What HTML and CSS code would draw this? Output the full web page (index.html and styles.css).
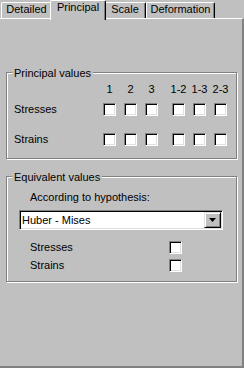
FILE: index.html
```html
<!DOCTYPE html>
<html lang="en">
<head>
  <meta charset="UTF-8">
  <meta name="viewport" content="width=device-width, initial-scale=1.0">
  <title>Principal</title>
  <link rel="stylesheet" href="styles.css">
</head>
<body>
  <div class="tabs">
    <div class="tab tab-detailed">Detailed</div>
    <div class="tab tab-principal active">Principal</div>
    <div class="tab tab-scale">Scale</div>
    <div class="tab tab-deformation">Deformation</div>
  </div>
  <main class="panel">
    <section class="group group-principal">
      <span class="group-title">Principal values</span>
      <div class="grid">
        <span></span>
        <span class="head">1</span>
        <span class="head">2</span>
        <span class="head">3</span>
        <span class="head">1-2</span>
        <span class="head">1-3</span>
        <span class="head">2-3</span>

        <span class="label">Stresses</span>
        <input type="checkbox" class="check">
        <input type="checkbox" class="check">
        <input type="checkbox" class="check">
        <input type="checkbox" class="check">
        <input type="checkbox" class="check">
        <input type="checkbox" class="check">

        <span class="label">Strains</span>
        <input type="checkbox" class="check">
        <input type="checkbox" class="check">
        <input type="checkbox" class="check">
        <input type="checkbox" class="check">
        <input type="checkbox" class="check">
        <input type="checkbox" class="check">
      </div>
    </section>
    <section class="group group-equivalent">
      <span class="group-title">Equivalent values</span>
      <div class="hint">According to hypothesis:</div>
      <div class="combo">
        <span class="combo-value">Huber - Mises</span>
        <span class="combo-btn">
          <svg width="7" height="4" viewBox="0 0 7 4"><polygon points="0,0 7,0 3.5,4" fill="#000"/></svg>
        </span>
      </div>
      <div class="row first">
        <span class="row-label">Stresses</span>
        <input type="checkbox" class="check">
      </div>
      <div class="row">
        <span class="row-label">Strains</span>
        <input type="checkbox" class="check">
      </div>
    </section>
  </main>
</body>
</html>
```

FILE: styles.css
```css
* { box-sizing: border-box; }
body {
  margin: 0;
  width: 244px;
  height: 368px;
  overflow: hidden;
  background-color: #c0c0c0;
  font-family: 'Liberation Sans', Arial, sans-serif;
  font-size: 11px;
  line-height: 13px;
  color: #000;
}

/* tab strip */
.tabs {
  display: flex;
  align-items: flex-end;
  height: 18px;
  padding-left: 1px;
}
.tab {
  height: 16px;
  border-top: 1px solid #fff;
  border-left: 1px solid #fff;
  border-right: 1px solid #000;
  border-top-left-radius: 2px;
  border-top-right-radius: 2px;
  box-shadow: inset -1px 0 #808080;
  background-color: #c0c0c0;
  text-align: center;
  white-space: nowrap;
}
.tab-detailed { width: 51px; }
.tab-principal { width: 52px; }
.tab-scale { width: 42px; }
.tab-deformation { width: 69px; }
.tab.active {
  position: relative;
  z-index: 1;
  width: 56px;
  height: 20px;
  margin: 0 -2px -2px;
}

/* tab body */
.panel {
  display: block;
  width: 244px;
  height: 350px;
  border-top: 1px solid #fff;
  border-right: 2px solid #808080;
  border-bottom: 2px solid #808080;
  padding-top: 53px;
}

.group {
  position: relative;
  margin-left: 6px;
  width: 231px;
  border: 1px solid #808080;
  box-shadow: 1px 1px 0 #fff, inset 1px 1px 0 #fff;
}
.group-title {
  position: absolute;
  top: -6px;
  left: 5px;
  padding: 0 2px;
  background-color: #c0c0c0;
  white-space: nowrap;
}

.group-principal { padding: 10px 0 12px 7px; }
.grid {
  display: grid;
  grid-template-columns: 89px 21px 21px 27px 21px 21px 13px;
  grid-template-rows: 20px 30px 13px;
  align-items: start;
}
.head {
  width: 13px;
  display: flex;
  justify-content: center;
  white-space: nowrap;
}
.label { white-space: nowrap; }

.check {
  appearance: none;
  -webkit-appearance: none;
  display: block;
  margin: 0;
  width: 13px;
  height: 13px;
  background-color: #fff;
  border: 1px solid;
  border-color: #808080 #fff #fff #808080;
  box-shadow: inset 1px 1px 0 #000, inset -1px -1px 0 #dfdfdf;
}

.group-equivalent {
  margin-top: 17px;
  padding: 14px 0 9px 12px;
}
.hint { margin-left: 11px; }

.combo {
  display: flex;
  align-items: center;
  margin-top: 6px;
  width: 204px;
  height: 20px;
  padding: 1px;
  background-color: #fff;
  border: 1px solid;
  border-color: #808080 #fff #fff #808080;
  box-shadow: inset 1px 1px 0 #000, inset -1px -1px 0 #dfdfdf;
}
.combo-value { flex: 1; padding-left: 1px; }
.combo-btn {
  display: flex;
  align-items: center;
  justify-content: center;
  width: 17px;
  height: 16px;
  background-color: #c0c0c0;
  border: 1px solid;
  border-color: #dfdfdf #000 #000 #dfdfdf;
  box-shadow: inset 1px 1px 0 #fff, inset -1px -1px 0 #808080;
}

.row {
  display: flex;
  align-items: center;
  height: 13px;
  margin-top: 5px;
  margin-left: 11px;
}
.row.first { margin-top: 11px; }
.row-label { width: 139px; }
```
